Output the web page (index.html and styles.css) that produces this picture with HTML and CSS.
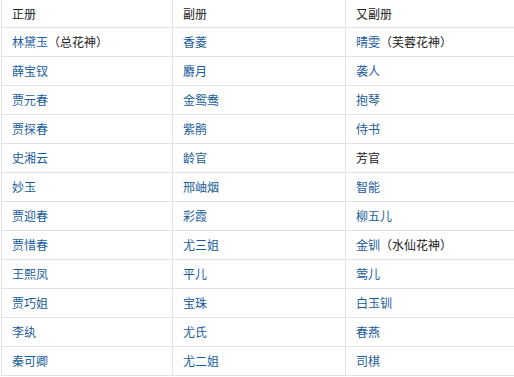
FILE: index.html
```html
<!DOCTYPE html>
<html lang="zh">
<head>
<meta charset="utf-8">
<link rel="stylesheet" href="styles.css">
</head>
<body>
<table class="roster">
  <thead>
    <tr><th>正册</th><th>副册</th><th>又副册</th></tr>
  </thead>
  <tbody>
    <tr><td><a>林黛玉</a>（总花神）</td><td><a>香菱</a></td><td><a>晴雯</a>（芙蓉花神）</td></tr>
    <tr><td><a>薛宝钗</a></td><td><a>麝月</a></td><td><a>袭人</a></td></tr>
    <tr><td><a>贾元春</a></td><td><a>金鸳鸯</a></td><td><a>抱琴</a></td></tr>
    <tr><td><a>贾探春</a></td><td><a>紫鹃</a></td><td><a>侍书</a></td></tr>
    <tr><td><a>史湘云</a></td><td><a>龄官</a></td><td>芳官</td></tr>
    <tr><td><a>妙玉</a></td><td><a>邢岫烟</a></td><td><a>智能</a></td></tr>
    <tr><td><a>贾迎春</a></td><td><a>彩霞</a></td><td><a>柳五儿</a></td></tr>
    <tr><td><a>贾惜春</a></td><td><a>尤三姐</a></td><td><a>金钏</a>（水仙花神）</td></tr>
    <tr><td><a>王熙凤</a></td><td><a>平儿</a></td><td><a>莺儿</a></td></tr>
    <tr><td><a>贾巧姐</a></td><td><a>宝珠</a></td><td><a>白玉钏</a></td></tr>
    <tr><td><a>李纨</a></td><td><a>尤氏</a></td><td><a>春燕</a></td></tr>
    <tr><td><a>秦可卿</a></td><td><a>尤二姐</a></td><td><a>司棋</a></td></tr>
  </tbody>
</table>
</body>
</html>
```

FILE: styles.css
```css
html, body {
  margin: 0;
  padding: 0;
  background: #fff;
  overflow: hidden;
}
body {
  padding-left: 1px;
  font-family: "Noto Sans CJK SC", "Noto Sans", sans-serif;
  font-size: 12px;
  color: #222;
}
.roster {
  border-collapse: collapse;
  table-layout: fixed;
  width: 513px;
}
.roster th,
.roster td {
  border: 1px solid #e2e2e2;
  padding: 0 0 0 10px;
  text-align: left;
  font-weight: normal;
  height: 28px;
  line-height: 16px;
  vertical-align: middle;
  white-space: nowrap;
}
.roster th:last-child,
.roster td:last-child {
  border-right: none;
}
.roster th {
  border-top: none;
  height: 27px;
}
.roster th:nth-child(1), .roster td:nth-child(1) { width: 160px; }
.roster th:nth-child(2), .roster td:nth-child(2) { width: 162px; }
.roster a {
  color: #1a5c9a;
  text-decoration: none;
}
```
